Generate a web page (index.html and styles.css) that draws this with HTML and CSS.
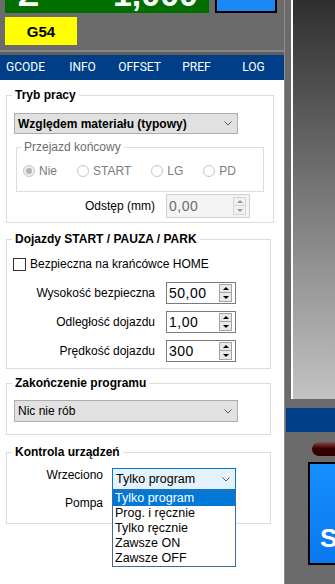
FILE: index.html
```html
<!DOCTYPE html>
<html lang="pl">
<head>
<meta charset="utf-8">
<title>Ustawienia</title>
<link rel="stylesheet" href="styles.css">
</head>
<body>
<div class="app">
  <div class="left">
    <div class="top">
      <div class="dro-row">
        <div class="dro"><span class="axis">Z</span><span class="val">1,000</span></div>
        <div class="zero-btn"></div>
      </div>
      <div class="wcs">G54</div>
    </div>
    <div class="tabs">
      <span>GCODE</span><span>INFO</span><span>OFFSET</span><span>PREF</span><span>LOG</span>
    </div>
    <div class="panel">
      <fieldset class="grp grp-wide g1">
        <legend>Tryb pracy</legend>
        <div class="select sel-mode bold">
          <span>Względem materiału (typowy)</span>
          <svg class="chev" width="8" height="5" viewBox="0 0 8 5"><polyline points="0.5,0.5 4,4 7.5,0.5" fill="none" stroke="#555" stroke-width="1"/></svg>
        </div>
        <fieldset class="sub">
          <legend>Przejazd końcowy</legend>
          <div class="radios">
            <div class="radio"><span class="circle checked"></span><span>Nie</span></div>
            <div class="radio"><span class="circle"></span><span>START</span></div>
            <div class="radio"><span class="circle"></span><span>LG</span></div>
            <div class="radio"><span class="circle"></span><span>PD</span></div>
          </div>
        </fieldset>
        <div class="row odst">
          <span class="lbl">Odstęp (mm)</span>
          <div class="spin spin-wide disabled">
            <span class="num">0,00</span>
            <div class="spin-btns"><span class="sb"><i class="up"></i></span><span class="sb"><i class="down"></i></span></div>
          </div>
        </div>
      </fieldset>

      <fieldset class="grp g2">
        <legend>Dojazdy START / PAUZA / PARK</legend>
        <div class="check-row"><span class="cbox"></span><span>Bezpieczna na krańcówce HOME</span></div>
        <div class="row r1">
          <span class="lbl">Wysokość bezpieczna</span>
          <div class="spin">
            <span class="num">50,00</span>
            <div class="spin-btns"><span class="sb"><i class="up"></i></span><span class="sb"><i class="down"></i></span></div>
          </div>
        </div>
        <div class="row rn">
          <span class="lbl">Odległość dojazdu</span>
          <div class="spin">
            <span class="num">1,00</span>
            <div class="spin-btns"><span class="sb"><i class="up"></i></span><span class="sb"><i class="down"></i></span></div>
          </div>
        </div>
        <div class="row rn">
          <span class="lbl">Prędkość dojazdu</span>
          <div class="spin">
            <span class="num">300</span>
            <div class="spin-btns"><span class="sb"><i class="up"></i></span><span class="sb"><i class="down"></i></span></div>
          </div>
        </div>
      </fieldset>

      <fieldset class="grp g3">
        <legend>Zakończenie programu</legend>
        <div class="select sel-end">
          <span>Nic nie rób</span>
          <svg class="chev" width="8" height="5" viewBox="0 0 8 5"><polyline points="0.5,0.5 4,4 7.5,0.5" fill="none" stroke="#555" stroke-width="1"/></svg>
        </div>
      </fieldset>

      <fieldset class="grp g4">
        <legend>Kontrola urządzeń</legend>
        <div class="ctl-row">
          <span class="lbl2">Wrzeciono</span>
          <div class="combo">
            <div class="select sel-ctl focus">
              <span>Tylko program</span>
              <svg class="chev" width="8" height="5" viewBox="0 0 8 5"><polyline points="0.5,0.5 4,4 7.5,0.5" fill="none" stroke="#555" stroke-width="1"/></svg>
            </div>
            <ul class="dropdown">
              <li class="hl">Tylko program</li>
              <li>Prog. i ręcznie</li>
              <li>Tylko ręcznie</li>
              <li>Zawsze ON</li>
              <li>Zawsze OFF</li>
            </ul>
          </div>
        </div>
        <div class="ctl-row ctl-2">
          <span class="lbl2">Pompa</span>
          <div class="combo">
            <div class="select sel-ctl"></div>
          </div>
        </div>
      </fieldset>
    </div>
  </div>
  <div class="right">
    <div class="screen"></div>
    <div class="rbar"></div>
    <div class="pill"></div>
    <div class="bigbtn">S</div>
  </div>
</div>
</body>
</html>
```
FILE: styles.css
```css
* { box-sizing: border-box; }
html, body { margin: 0; padding: 0; }
body {
  width: 335px;
  height: 584px;
  overflow: hidden;
  background: #6b6b6b;
  font-family: "Liberation Sans", Arial, sans-serif;
  font-size: 12px;
  color: #000;
}
.app { display: flex; height: 584px; }
.left { width: 284px; display: flex; flex-direction: column; }

/* top DRO area */
.top { height: 52px; padding-left: 5px; border-bottom: 2px solid #858585; }
.dro-row { display: flex; height: 13px; }
.dro {
  width: 204px; height: 13px; overflow: hidden;
  background: #006f00; color: #fff;
  display: flex; align-items: flex-end; justify-content: space-between;
  padding: 0 11px 0 13px;
  font-weight: bold; font-size: 34px; line-height: 38px;
}
.zero-btn {
  width: 62px; height: 13px; margin-left: 6px;
  background: #1a88f5; border: 2px solid #000; border-top: 0;
}
.wcs {
  width: 72px; height: 28px; margin-top: 4px;
  background: #ffff00;
  font-weight: bold; font-size: 15px;
  display: flex; align-items: center; justify-content: center;
}
.tabs {
  height: 28px; margin-left: -3px;
  border-top: 3px solid #5f5f5f;
  background: #003f87; color: #fff;
  display: grid; grid-template-columns: repeat(5, 57px);
  font-family: Roboto, "Liberation Sans", sans-serif; font-size: 12px;
  line-height: 25px; text-align: center;
}

/* settings panel */
.panel { flex: 1; background: #fff; padding-top: 8px; }
fieldset.grp {
  margin: 0 0 0 6px; width: 265px; min-width: 0;
  border: 1px solid #dcdcdc; padding: 0;
}
fieldset.grp-wide { width: 268px; }
.grp > legend { margin-left: 5px; padding: 0 3px; font-weight: bold; line-height: 14px; }
fieldset.g1 { padding-bottom: 4px; }
fieldset.g2 { margin-top: 9px; padding-bottom: 6px; }
fieldset.g3 { margin-top: 7px; padding-bottom: 12px; }
fieldset.g4 { margin-top: 10px; padding-bottom: 5px; }

.select {
  display: flex; align-items: center; justify-content: space-between;
  height: 21px; width: 224px;
  background: #e1e1e1; border: 1px solid #adadad;
  padding: 0 5px 0 3px;
}
.bold { font-weight: bold; }
.chev { display: block; flex: none; }
.sel-mode { margin: 11px 0 0 7px; }
.sel-end { margin: 10px 0 0 7px; height: 22px; }
.sel-ctl { width: 124px; height: 22px; font-size: 12.5px; }
.select.focus { background: #e5f1fb; border-color: #0078d7; }

fieldset.sub {
  margin: 6px 0 0 9px; width: 248px; min-width: 0;
  border: 1px solid #dcdcdc; padding: 0 0 13px 0;
}
.sub > legend { margin-left: 4px; padding: 0 3px; line-height: 14px; color: #6d6d6d; }
.radios { display: flex; gap: 20px; margin: 10px 0 0 6px; line-height: 14px; color: #7c7c7c; }
.radio { display: flex; align-items: center; gap: 4px; }
.circle {
  width: 12px; height: 12px; border-radius: 50%;
  border: 1px solid #c4c4c4; background: #fff;
  display: flex; align-items: center; justify-content: center;
}
.circle.checked { background: #efefef; }
.circle.checked::after {
  content: ""; width: 6px; height: 6px; border-radius: 50%; background: #b3b3b3;
}

.row { display: flex; align-items: center; }
.lbl { width: 148px; text-align: right; line-height: 14px; }
.odst { margin-top: 2px; }
.r1 { margin-top: 11px; }
.rn { margin-top: 7px; }

.spin {
  display: flex; align-items: center;
  width: 70px; height: 22px; margin-left: 11px;
  border: 1px solid #7a7a7a; background: #fff;
  padding-left: 2px;
}
.spin-wide { width: 84px; height: 24px; }
.num { font-size: 14px; letter-spacing: 0.5px; }
.spin-btns { margin-left: auto; margin-right: 3px; display: flex; flex-direction: column; }
.sb {
  width: 13px; height: 9px; border: 1px solid #a5a5a5; background: #e9e9e9;
  display: flex; align-items: center; justify-content: center;
}
.sb + .sb { border-top: 0; }
.up { width: 0; height: 0; border-left: 3px solid transparent; border-right: 3px solid transparent; border-bottom: 3px solid #000; }
.down { width: 0; height: 0; border-left: 3px solid transparent; border-right: 3px solid transparent; border-top: 3px solid #000; }
.spin.disabled { background: #f4f4f4; border-color: #cfcfcf; }
.spin.disabled .num { color: #6d6d6d; }
.spin.disabled .sb { border-color: #d5d5d5; background: #f0f0f0; }
.spin.disabled .up { border-bottom-color: #9a9a9a; }
.spin.disabled .down { border-top-color: #9a9a9a; }

.check-row { display: flex; align-items: center; gap: 4px; margin: 11px 0 0 6px; line-height: 14px; }
.cbox { width: 13px; height: 13px; border: 1px solid #333; background: #fff; }

.ctl-row { display: flex; align-items: flex-start; margin-top: 9px; }
.ctl-row.ctl-2 { margin-top: 6px; }
.lbl2 { width: 96px; text-align: right; line-height: 14px; }
.combo { position: relative; margin-left: 9px; }
.dropdown {
  position: absolute; top: 100%; left: 0; z-index: 2;
  width: 124px; margin: 0; padding: 0; list-style: none;
  border: 1px solid #3d6b9e; background: #fff;
  font-size: 12.5px;
}
.dropdown li { line-height: 15px; height: 15px; padding-left: 2px; white-space: nowrap; }
.dropdown li.hl { background: #0078d7; color: #fff; }

/* right side */
.right { flex: 1; border-left: 1px solid #8c8c8c; display: flex; flex-direction: column; min-width: 0; }
.screen {
  height: 399px; margin-left: 6px;
  border-left: 2px solid #fff;
  background: linear-gradient(#2f2f2f, #c3c3c3);
}
.rbar { height: 24px; margin-top: 9px; margin-left: 1px; background: #003f87; }
.pill {
  height: 14px; margin-top: 10px; margin-left: 27px; margin-right: -20px;
  border-radius: 7px;
  background: linear-gradient(#8a4a4a, #3a0000 45%, #2a0000);
}
.bigbtn {
  height: 103px; margin-top: 6px; margin-left: 23px; margin-right: -10px;
  border: 2px solid #000;
  background: linear-gradient(#1590ff, #0a78ee);
  color: #fff; font-weight: bold; font-size: 26px; line-height: 26px;
  display: flex; align-items: flex-end; padding: 0 0 12px 10px;
}
```
